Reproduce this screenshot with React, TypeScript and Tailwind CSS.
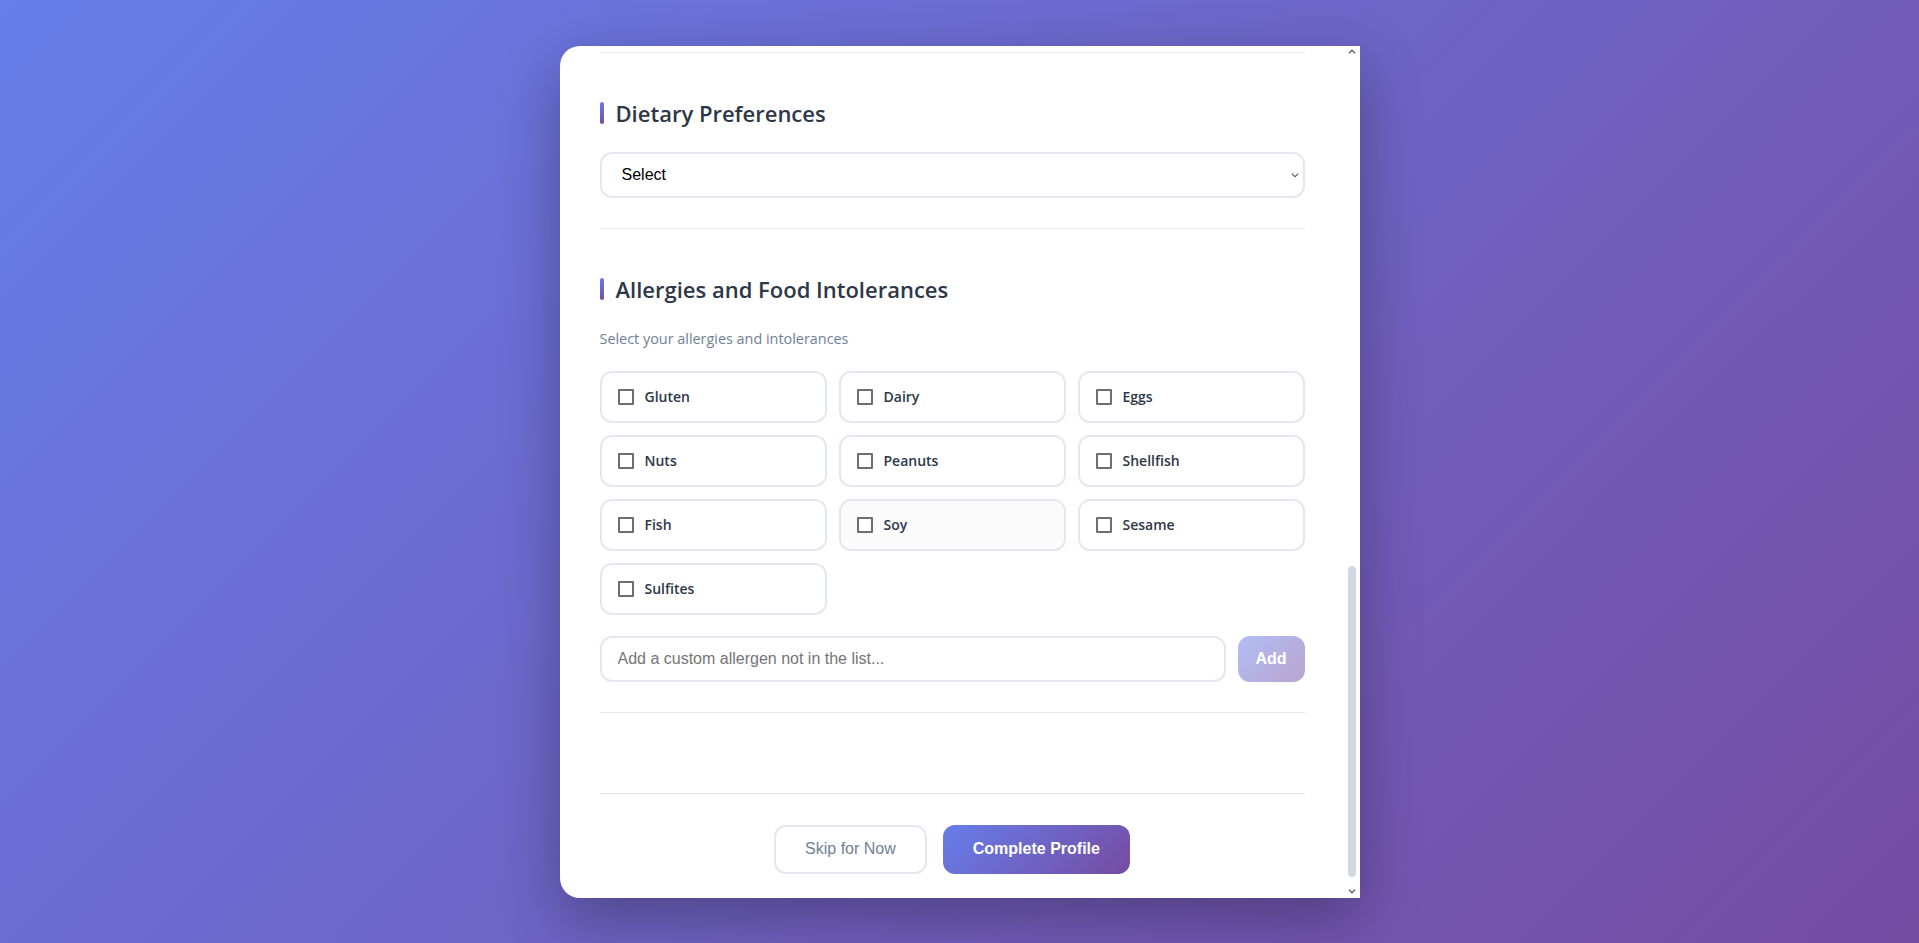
import React, { useLayoutEffect, useRef, useState } from "react";

const allergens = [
  "Gluten",
  "Dairy",
  "Eggs",
  "Nuts",
  "Peanuts",
  "Shellfish",
  "Fish",
  "Soy",
  "Sesame",
  "Sulfites",
];

const SectionTitle = ({ children }: { children: React.ReactNode }) => (
  <h2 className="flex items-center gap-3 text-[22px] font-semibold leading-[30px] text-[#2d3748]">
    <span className="block w-1 h-[22px] rounded-sm bg-[linear-gradient(180deg,#667eea,#764ba2)]" />
    {children}
  </h2>
);

const Field = ({ label, placeholder }: { label: string; placeholder: string }) => (
  <div className="flex flex-col gap-[6px]">
    <label className="text-sm font-semibold leading-5 text-[#4a5568]">{label}</label>
    <input
      type="text"
      placeholder={placeholder}
      className="h-[46px] w-full rounded-xl border-2 border-[#e2e8f0] px-4 font-['Liberation_Sans',Arial,sans-serif] text-base outline-none"
    />
  </div>
);

const Choice = ({
  label,
  checked,
  onChange,
  muted,
}: {
  label: string;
  checked: boolean;
  onChange: () => void;
  muted?: boolean;
}) => (
  <label
    className={`flex h-[52px] cursor-pointer items-center gap-[11px] rounded-xl border-2 border-[#e2e8f0] px-4 text-sm font-semibold leading-5 text-[#2d3748] ${
      muted ? "bg-[#fbfbfc]" : "bg-white"
    }`}
  >
    <input
      type="checkbox"
      checked={checked}
      onChange={onChange}
      className="h-4 w-4 shrink-0 appearance-none rounded-[1px] border-2 border-[#6e6e6e] bg-white checked:border-[#667eea] checked:bg-[#667eea]"
    />
    {label}
  </label>
);

const SimpleSelect = ({ options }: { options: string[] }) => (
  <div className="relative">
    <select className="h-[46px] w-full appearance-none rounded-xl border-2 border-[#e2e8f0] bg-white pl-[20px] pr-8 font-['Liberation_Sans',Arial,sans-serif] text-base text-black outline-none">
      <option>Select</option>
      {options.map((o) => (
        <option key={o}>{o}</option>
      ))}
    </select>
    <svg
      width="8"
      height="5"
      viewBox="0 0 8 5"
      className="pointer-events-none absolute right-[6px] top-[21px]"
    >
      <path d="M0.8 0.8 L4 3.8 L7.2 0.8" fill="none" stroke="#666666" strokeWidth="1.2" />
    </svg>
  </div>
);

const ScrollBar = () => (
  <div className="flex w-[15px] shrink-0 flex-col bg-white">
    <div className="flex h-3 items-center justify-center">
      <svg width="8" height="5" viewBox="0 0 8 5">
        <path d="M1 4.2 L4 1.2 L7 4.2" fill="none" stroke="#5f5f5f" strokeWidth="1.4" />
      </svg>
    </div>
    <div className="flex flex-1 flex-col">
      <div className="mt-auto mb-[9px] ml-[3px] h-[311px] w-2 rounded-full bg-[#cfd9e1]" />
    </div>
    <div className="flex h-3 items-center justify-center">
      <svg width="8" height="5" viewBox="0 0 8 5">
        <path d="M1 0.8 L4 3.8 L7 0.8" fill="none" stroke="#5f5f5f" strokeWidth="1.4" />
      </svg>
    </div>
  </div>
);

const Profile = () => {
  const scrollRef = useRef<HTMLDivElement>(null);
  const [selected, setSelected] = useState<string[]>([]);
  const [custom, setCustom] = useState("");

  useLayoutEffect(() => {
    const el = scrollRef.current;
    if (el) el.scrollTop = el.scrollHeight;
  }, []);

  const toggle = (name: string) => {
    setSelected((prev) =>
      prev.includes(name) ? prev.filter((a) => a !== name) : [...prev, name]
    );
  };

  return (
    <div className="h-screen w-full flex items-center justify-center bg-[linear-gradient(135deg,#667eea_0%,#764ba2_100%)] font-['Segoe_UI','Open_Sans',sans-serif]">
      <div className="flex w-[800px] h-[852px] rounded-l-[20px] bg-white shadow-[0_20px_60px_rgba(0,0,0,0.3)]">
        <div
          ref={scrollRef}
          className="flex-1 overflow-y-auto rounded-l-[20px] [scrollbar-width:none]"
        >
          <div className="px-10 pt-10 pb-6">
            {/* header, scrolled out of view */}
            <div className="mb-10 text-center">
              <h1 className="text-[32px] font-bold leading-10 text-[#2d3748]">
                Complete Your Profile
              </h1>
              <p className="mt-2 text-base text-[#718096]">
                Help us personalize your meal recommendations
              </p>
            </div>

            <section className="border-b border-[#e2e8f0] pb-[30px] mb-[45px]">
              <div className="mb-6">
                <SectionTitle>Basic Information</SectionTitle>
              </div>
              <div className="grid grid-cols-2 gap-5">
                <Field label="Age" placeholder="Enter your age" />
                <Field label="Gender" placeholder="Select gender" />
                <Field label="Height (cm)" placeholder="Enter your height" />
                <Field label="Weight (kg)" placeholder="Enter your weight" />
              </div>
            </section>

            <section className="border-b border-[#e2e8f0] pb-[30px] mb-[45px]">
              <div className="mb-6">
                <SectionTitle>Activity Level</SectionTitle>
              </div>
              <SimpleSelect options={["Sedentary", "Lightly active", "Very active"]} />
            </section>

            <section className="border-b border-[#e2e8f0] pb-[30px] mb-[45px]">
              <div className="mb-6">
                <SectionTitle>Health Goals</SectionTitle>
              </div>
              <div className="grid grid-cols-3 gap-3">
                {["Lose weight", "Maintain weight", "Gain muscle", "Eat healthier", "More energy", "Better sleep"].map(
                  (g) => (
                    <Choice key={g} label={g} checked={false} onChange={() => {}} />
                  )
                )}
              </div>
            </section>

            <section className="border-b border-[#e2e8f0] pb-[30px] mb-[45px]">
              <div className="mb-6">
                <SectionTitle>Health Conditions</SectionTitle>
              </div>
              <div className="grid grid-cols-3 gap-3">
                {["Diabetes", "Hypertension", "High cholesterol", "Heart disease", "Kidney disease", "None"].map(
                  (g) => (
                    <Choice key={g} label={g} checked={false} onChange={() => {}} />
                  )
                )}
              </div>
            </section>

            <section className="border-b border-[#e2e8f0] pb-[30px] mb-[45px]">
              <div className="mb-6">
                <SectionTitle>Cuisine Preferences</SectionTitle>
              </div>
              <SimpleSelect options={["Italian", "Asian", "Mexican", "Mediterranean"]} />
            </section>

            <section className="border-b border-[#e2e8f0] pb-[30px] mb-[45px]">
              <div className="mb-6">
                <SectionTitle>Cooking Skill</SectionTitle>
              </div>
              <SimpleSelect options={["Beginner", "Intermediate", "Advanced"]} />
            </section>

            <section className="border-b border-[#e2e8f0] pb-[30px] mb-[45px]">
              <div className="mb-6">
                <SectionTitle>Dietary Preferences</SectionTitle>
              </div>
              <SimpleSelect options={["Vegetarian", "Vegan", "Pescatarian", "Keto", "Paleo"]} />
            </section>

            <section className="border-b border-[#e2e8f0] pb-[30px]">
              <div className="mb-6">
                <SectionTitle>Allergies and Food Intolerances</SectionTitle>
              </div>
              <p className="mb-[21px] text-[14.4px] leading-[22px] text-[#718096]">
                Select your allergies and intolerances
              </p>
              <div className="grid grid-cols-3 gap-3">
                {allergens.map((a) => (
                  <Choice
                    key={a}
                    label={a}
                    checked={selected.includes(a)}
                    onChange={() => toggle(a)}
                    muted={a === "Soy"}
                  />
                ))}
              </div>
              <div className="mt-[21px] flex gap-3">
                <input
                  type="text"
                  value={custom}
                  onChange={(e) => setCustom(e.target.value)}
                  placeholder="Add a custom allergen not in the list..."
                  className="h-[46px] flex-1 rounded-xl border-2 border-[#e2e8f0] px-4 font-['Liberation_Sans',Arial,sans-serif] text-base outline-none placeholder:text-[#757575]"
                />
                <button
                  type="button"
                  disabled={!custom}
                  className="h-[46px] w-[67px] rounded-xl bg-[linear-gradient(135deg,#667eea_0%,#764ba2_100%)] font-['Liberation_Sans',Arial,sans-serif] text-base font-semibold text-white disabled:opacity-50"
                >
                  Add
                </button>
              </div>
            </section>

            <div className="mt-[80px] flex justify-center gap-4 border-t border-[#e2e8f0] pt-[31px]">
              <button
                type="button"
                className="h-[49px] rounded-xl border-2 border-[#e2e8f0] bg-white px-[29px] font-['Liberation_Sans',Arial,sans-serif] text-base text-[#718096]"
              >
                Skip for Now
              </button>
              <button
                type="button"
                className="h-[49px] rounded-xl bg-[linear-gradient(135deg,#667eea_0%,#764ba2_100%)] px-[30px] font-['Liberation_Sans',Arial,sans-serif] text-base font-bold text-white"
              >
                Complete Profile
              </button>
            </div>
          </div>
        </div>
        <ScrollBar />
      </div>
    </div>
  );
};

export default function App() {
  return <Profile />;
}
